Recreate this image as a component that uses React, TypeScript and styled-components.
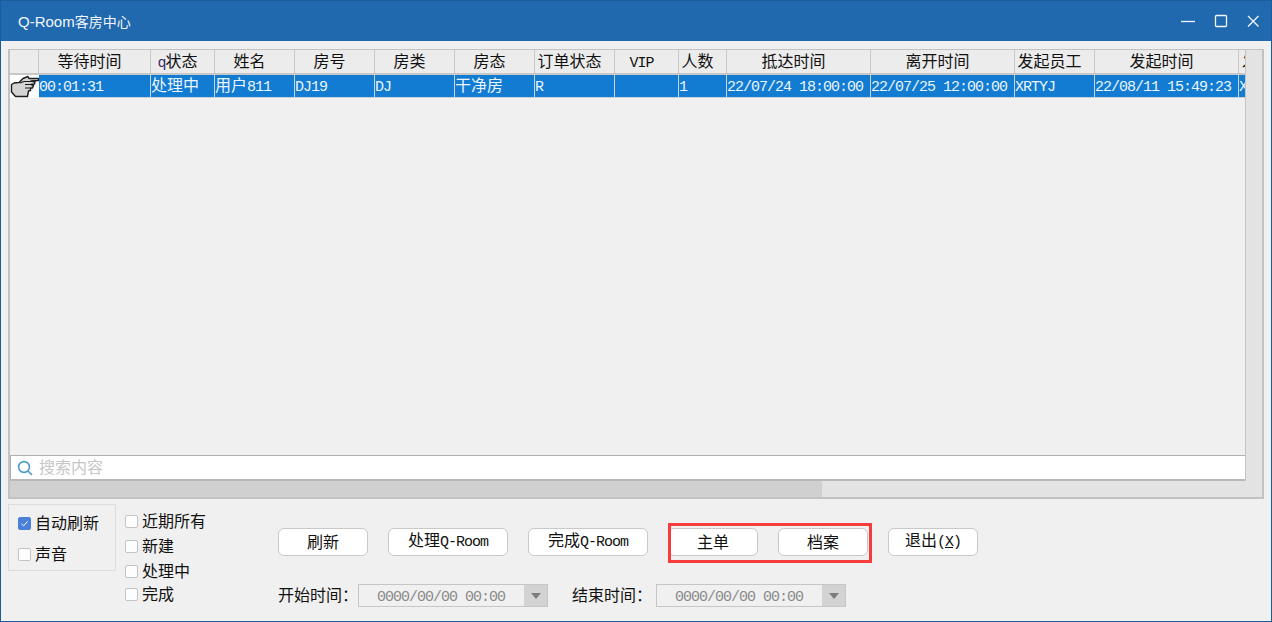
import React from "react";
import styled, { createGlobalStyle } from "styled-components";

const Global = createGlobalStyle`
  html, body { margin: 0; padding: 0; background: #f0f0f0; }
  #root { width: 1272px; height: 622px; overflow: hidden; }
  * { box-sizing: border-box; }
`;

const cjk = `"Noto Sans CJK SC", "Noto Sans", sans-serif`;

const Frame = styled.div`
  width: 1272px;
  height: 622px;
  display: flex;
  flex-direction: column;
  background: #f0f0f0;
  border: 1px solid #1b5c9a;
  font-family: ${cjk};
  font-size: 16px;
  color: #111;
`;
const TitleBar = styled.div`
  height: 40px;
  flex: none;
  background: #2069ae;
  color: #f2f7fb;
  display: flex;
  align-items: center;
  padding: 0 11px 0 17px;
`;
const TitleText = styled.div`
  flex: 1;
  font-size: 14px;
  line-height: 42px;
  & > span { font-family: "Liberation Sans", sans-serif; font-size: 15px; }
`;
const WinButton = styled.svg`
  display: block;
  width: 14px;
  height: 14px;
  margin-left: ${(p: { $gap: number }) => p.$gap}px;
  fill: none;
  stroke: #f2f7fb;
  stroke-width: 1.3;
`;
const GridPanel = styled.div`
  margin: 8px 7px 0 7px;
  width: 1256px;
  height: 450px;
  flex: none;
  border: 2px solid #c2c2c2;
  border-top-width: 1px;
  display: flex;
  flex-direction: column;
`;
const GridMain = styled.div`
  flex: 1;
  min-height: 0;
  display: flex;
`;
const GridContent = styled.div`
  width: 1236px;
  display: flex;
  flex-direction: column;
  border-right: 1px solid #c4c4c4;
`;
const Table = styled.div`
  flex: 1;
  overflow: hidden;
`;
const TableRow = styled.div`
  display: grid;
  grid-template-columns: 29px 112px 64px 80px 80px 80px 80px 80px 64px 48px 144px 144px 80px 144px 7px;
  height: ${(p: { $head?: boolean }) => (p.$head ? 25 : 23)}px;
  border-bottom: ${(p: { $head?: boolean }) => (p.$head ? "2px solid #c8c8c8" : "none")};
`;
const HeadCell = styled.div`
  background: #ececec;
  border-right: 1px solid #c8c8c8;
  text-align: center;
  padding-right: 10px;
  line-height: 20px;
  height: 23px;
  white-space: nowrap;
  color: #111;
`;
const LastHead = styled(HeadCell)`
  border-right: none;
  text-align: left;
  padding: 0 0 0 3px;
  overflow: hidden;
`;
const Cell = styled.div`
  background: #127bd2;
  color: #eaf5ff;
  border-right: 1px solid #c6d2dc;
  border-bottom: 1px solid #c6d2dc;
  line-height: 18px;
  white-space: nowrap;
`;
const LastCell = styled(Cell)`
  border-right: none;
  overflow: hidden;
`;
const HandCell = styled.div`
  background: #fff;
  display: flex;
  align-items: center;
  overflow: hidden;
`;
const Lat = styled.span`
  font-family: "Liberation Mono", monospace;
  font-size: 15px;
  letter-spacing: -1px;
`;
const SmallQ = styled(Lat)`
  color: #3a2a70;
`;
const SearchBar = styled.div`
  height: 26px;
  flex: none;
  background: #fff;
  border-top: 1px solid #b0b0b0;
  border-bottom: 2px solid #b8b8b8;
  border-left: 1px solid #b0b0b0;
  display: flex;
  align-items: center;
  padding-left: 6px;
  gap: 6px;
  color: #c6c6c6;
  line-height: 20px;
`;
const SearchText = styled.span`
  margin-top: -3px;
`;
const VScroll = styled.div`
  flex: 1;
  background: #e3e3e3;
`;
const HScroll = styled.div`
  height: 16px;
  flex: none;
  background: #e3e3e3;
  display: flex;
`;
const HThumb = styled.div`
  width: 812px;
  background: #d0d0d0;
  border-radius: 0 2px 2px 0;
`;
const Bottom = styled.div`
  flex: 1;
  display: flex;
  padding: 5px 0 0 7px;
`;
const Group = styled.div`
  width: 108px;
  height: 67px;
  flex: none;
  border: 1px solid #dcdcdc;
  display: flex;
  flex-direction: column;
  padding: 6px 0 0 9px;
  gap: 7px;
`;
const CheckRow = styled.label`
  display: flex;
  align-items: center;
  gap: 4px;
  height: ${(p: { $h: number }) => p.$h}px;
  white-space: nowrap;
`;
const CheckText = styled.span`
  line-height: 20px;
  margin-top: -3px;
`;
const Box = styled.span<{ $on?: boolean }>`
  width: 13px;
  height: 13px;
  flex: none;
  border-radius: 2px;
  border: 1px solid ${(p) => (p.$on ? "#4a80d8" : "#c4c4c4")};
  background: ${(p) => (p.$on ? "#4a80d8" : "#fdfdfd")};
  display: flex;
  align-items: center;
  justify-content: center;
`;
const Filters = styled.div`
  width: 162px;
  flex: none;
  display: flex;
  flex-direction: column;
  padding: 5px 0 0 9px;
`;
const Actions = styled.div`
  flex: 1;
  display: flex;
  flex-direction: column;
  padding-top: 24px;
`;
const ButtonRow = styled.div`
  display: flex;
  align-items: center;
  gap: 20px;
`;
const Btn = styled.div`
  width: ${(p: { $w: number }) => p.$w}px;
  height: 28px;
  background: #fff;
  border: 1px solid #c8c8c8;
  border-radius: 6px;
  display: flex;
  align-items: center;
  justify-content: center;
  padding-bottom: 3px;
  white-space: nowrap;
`;
const BtnLabel = styled.span`
  line-height: 20px;
`;
const Marked = styled.div`
  position: relative;
  display: flex;
  gap: 20px;
  &::after {
    content: "";
    box-sizing: border-box;
    position: absolute;
    left: 0;
    top: -5px;
    width: 204px;
    height: 40px;
    border: 3px solid #f73c3c;
    pointer-events: none;
  }
`;
const DateRow = styled.div`
  display: flex;
  align-items: center;
  margin-top: 28px;
`;
const DateLabel = styled.div`
  width: ${(p: { $w: number }) => p.$w}px;
  flex: none;
  line-height: 20px;
  margin-top: -3px;
  white-space: nowrap;
`;
const DateBox = styled.div`
  width: 190px;
  height: 23px;
  flex: none;
  margin-right: 24px;
  border: 1px solid #c6c6c6;
  display: flex;
  color: #8a8a8a;
  line-height: 19px;
`;
const DateValue = styled.div`
  flex: 1;
  padding-left: 18px;
  white-space: nowrap;
`;
const DateArrow = styled.div`
  width: 23px;
  background: #d3d3d3;
  display: flex;
  align-items: center;
  justify-content: center;
`;

const Hand = () => (
  <svg width="29" height="23" viewBox="0 0 29 23">
    <path
      d="M1.5 9.5 L4 8 L9 7.5 L13 3.5 L18 1.5 L19 3.5 L28.5 3.5 L28.5 5.5 L21 6 L25 7 L24.5 9 L21 9.5 L23.5 10.5 L22.5 13 L20.5 13 L20.5 15.5 L18.5 16 L17.5 21.5 L5.5 21.5 L1.5 17 Z"
      fill="#d4d4d4"
      stroke="#1c1c1c"
      strokeWidth="1.4"
      strokeLinejoin="round"
    />
    <path d="M14 6.5 H21 M15 9.5 H21 M15 13 H20.5 M10 8 L14 6.5" stroke="#1c1c1c" strokeWidth="1.2" fill="none" />
  </svg>
);

const Arrow = () => (
  <svg width="10" height="6" viewBox="0 0 10 6">
    <path d="M0 0H10L5 6Z" fill="#7c7c7c" />
  </svg>
);

const Check = () => (
  <svg width="9" height="9" viewBox="0 0 9 9">
    <path d="M1.5 4.8 L3.6 6.8 L7.6 2.4" fill="none" stroke="#fff" strokeWidth="1" />
  </svg>
);

const L = (s: string) => <Lat>{s}</Lat>;

const heads: React.ReactNode[] = [
  "",
  "等待时间",
  <><SmallQ>q</SmallQ>状态</>,
  "姓名",
  "房号",
  "房类",
  "房态",
  "订单状态",
  L("VIP"),
  "人数",
  "抵达时间",
  "离开时间",
  "发起员工",
  "发起时间",
];

const cells: React.ReactNode[] = [
  L("00:01:31"),
  "处理中",
  <>用户{L("811")}</>,
  L("DJ19"),
  L("DJ"),
  "干净房",
  L("R"),
  "",
  L("1"),
  L("22/07/24 18:00:00"),
  L("22/07/25 12:00:00"),
  L("XRTYJ"),
  L("22/08/11 15:49:23"),
];

const filters: [string, number][] = [["近期所有", 25], ["新建", 25], ["处理中", 25], ["完成", 21]];

export default function App() {
  return (
    <Frame>
      <Global />
      <TitleBar>
        <TitleText><span>Q-Room</span>客房中心</TitleText>
        <WinButton $gap={0} viewBox="0 0 14 14"><path d="M0 7.5H14" /></WinButton>
        <WinButton $gap={19} viewBox="0 0 14 14"><rect x="1.5" y="1.5" width="11" height="11" rx="1" /></WinButton>
        <WinButton $gap={18} viewBox="0 0 14 14"><path d="M2 2L12.5 12.5M12.5 2L2 12.5" /></WinButton>
      </TitleBar>
      <GridPanel>
        <GridMain>
          <GridContent>
            <Table>
              <TableRow $head>
                {heads.map((h, i) => <HeadCell key={i}>{h}</HeadCell>)}
                <LastHead>发</LastHead>
              </TableRow>
              <TableRow>
                <HandCell><Hand /></HandCell>
                {cells.map((c, i) => <Cell key={i}>{c}</Cell>)}
                <LastCell>{L("X")}</LastCell>
              </TableRow>
            </Table>
            <SearchBar>
              <svg width="16" height="16" viewBox="0 0 16 16" fill="none" stroke="#4a9cc8" strokeWidth="1.6">
                <circle cx="7" cy="7" r="5.4" />
                <path d="M11 11L15 15" />
              </svg>
              <SearchText>搜索内容</SearchText>
            </SearchBar>
          </GridContent>
          <VScroll />
        </GridMain>
        <HScroll><HThumb /></HScroll>
      </GridPanel>
      <Bottom>
        <Group>
          <CheckRow $h={24}><Box $on><Check /></Box><CheckText>自动刷新</CheckText></CheckRow>
          <CheckRow $h={24}><Box /><CheckText>声音</CheckText></CheckRow>
        </Group>
        <Filters>
          {filters.map(([f, h]) => (
            <CheckRow key={f} $h={h}><Box /><CheckText>{f}</CheckText></CheckRow>
          ))}
        </Filters>
        <Actions>
          <ButtonRow>
            <Btn $w={90}><BtnLabel>刷新</BtnLabel></Btn>
            <Btn $w={120}><BtnLabel>处理{L("Q-Room")}</BtnLabel></Btn>
            <Btn $w={120}><BtnLabel>完成{L("Q-Room")}</BtnLabel></Btn>
            <Marked>
              <Btn $w={90}><BtnLabel>主单</BtnLabel></Btn>
              <Btn $w={90}><BtnLabel>档案</BtnLabel></Btn>
            </Marked>
            <Btn $w={90}><BtnLabel>退出{L("(")}<Lat as="u">X</Lat>{L(")")}</BtnLabel></Btn>
          </ButtonRow>
          <DateRow>
            <DateLabel $w={80}>开始时间：</DateLabel>
            <DateBox><DateValue>{L("0000/00/00 00:00")}</DateValue><DateArrow><Arrow /></DateArrow></DateBox>
            <DateLabel $w={84}>结束时间：</DateLabel>
            <DateBox><DateValue>{L("0000/00/00 00:00")}</DateValue><DateArrow><Arrow /></DateArrow></DateBox>
          </DateRow>
        </Actions>
      </Bottom>
    </Frame>
  );
}
